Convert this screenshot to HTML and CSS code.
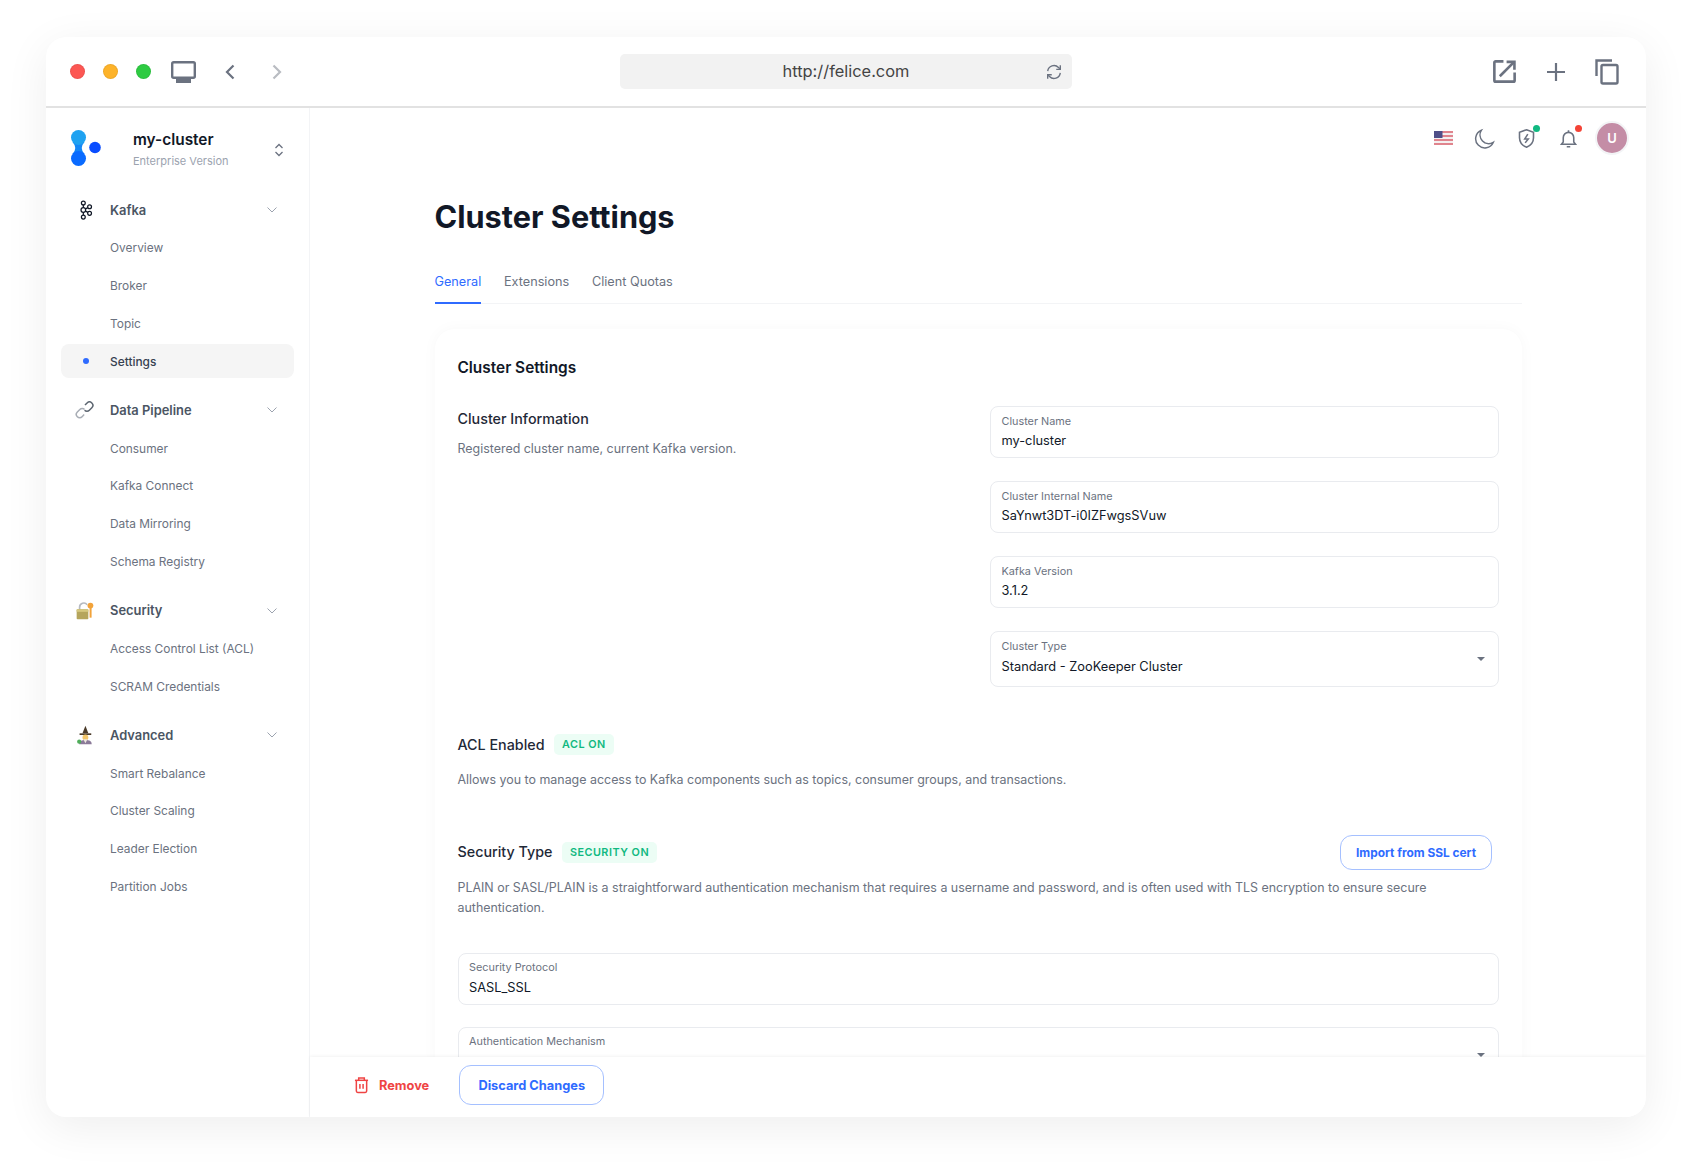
FILE: index.html
```html
<!DOCTYPE html>
<html lang="en">
<head>
<meta charset="utf-8">
<title>Cluster Settings</title>
<link rel="stylesheet" href="styles.css">
</head>
<body>
<div class="window">
  <header class="chrome">
    <div class="chrome-left">
      <span class="dot dot-red"></span><span class="dot dot-orange"></span><span class="dot dot-green"></span>
      <svg class="monitor" viewBox="0 0 25 22"><rect x="1.2" y="1.2" width="22.6" height="15.6" rx="1.5" fill="#fff" stroke="#6b7280" stroke-width="2.4"/><rect x="5" y="18" width="15" height="4" fill="#6b7280"/></svg>
      <svg class="nav-arrow back" viewBox="0 0 10 16"><path d="M8.5 1.500 2 8l6.500 6.500" fill="none" stroke="#6b7280" stroke-width="2.200"/></svg>
      <svg class="nav-arrow forward" viewBox="0 0 10 16"><path d="M1.500 1.500 8 8l-6.500 6.500" fill="none" stroke="#b9bcc2" stroke-width="2.200"/></svg>
    </div>
    <div class="urlbar">
      <span class="url">http://felice.com</span>
      <svg class="refresh" viewBox="0 0 20 20" fill="none" stroke="#6b7280" stroke-width="1.500"><path d="M3 9a7 7 0 0 1 12-4l1.500 1.500"/><path d="M17 11a7 7 0 0 1-12 4l-1.500-1.500"/><path d="M17 2.500V7h-4.500"/><path d="M3 17.500V13h4.500"/></svg>
    </div>
    <div class="chrome-right">
      <svg class="chrome-icon" viewBox="0 0 22 22" fill="none" stroke="#6b7280" stroke-width="2.500"><path d="M10 1.300H2.500a1.200 1.200 0 0 0-1.200 1.200v17a1.200 1.200 0 0 0 1.200 1.200h17a1.200 1.200 0 0 0 1.200-1.200V12"/><path d="M6.500 15.500 20 2"/><path d="M13 1.800h7.500v7.500"/></svg>
      <svg class="chrome-icon plus" viewBox="0 0 18 18" fill="none" stroke="#6b7280" stroke-width="2.200"><path d="M9 0v18M0 9h18"/></svg>
      <svg class="chrome-icon copy" viewBox="0 0 24 26" fill="none" stroke="#6b7280" stroke-width="2.400"><path d="M1.500 17V1.500H17"/><rect x="6.500" y="6" width="16" height="18.500" rx="1.500"/></svg>
    </div>
  </header>
  <div class="app">
    <aside class="sidebar">
      <div class="brand">
        <svg class="logo" viewBox="0 0 30 36"><path d="M1.500 12 Q7 18 1.500 24 L13.500 24 Q8 18 13.500 12 Z" fill="#1487f6"/><circle cx="7.500" cy="7.500" r="7.500" fill="#1fa2f1"/><circle cx="7.500" cy="28.500" r="7.500" fill="#0a6bff"/><circle cx="24" cy="17.500" r="5.800" fill="#0a4dff"/></svg>
        <div class="brand-text">
          <div class="brand-name">my-cluster</div>
          <div class="brand-sub">Enterprise Version</div>
        </div>
        <svg class="updown" viewBox="0 0 10 14" fill="none" stroke="#6b7280" stroke-width="1.300"><path d="M1.500 5 5 1.500 8.500 5"/><path d="M1.500 9 5 12.500 8.500 9"/></svg>
      </div>
      <nav class="nav">
        <div class="nav-section">
          <div class="nav-head">
            <svg class="nav-icon" viewBox="0 0 24 24" fill="none" stroke="#111827" stroke-width="1.500"><circle cx="10" cy="3.500" r="2.300"/><circle cx="10" cy="12" r="2.800"/><circle cx="10" cy="20.500" r="2.300"/><circle cx="17.500" cy="8" r="2.300"/><circle cx="17.500" cy="16" r="2.300"/><path d="M10 5.800v3.400M10 14.800v3.400M12.500 10.700l3-1.500M12.500 13.300l3 1.500"/></svg>
            <span>Kafka</span>
            <svg class="chev" viewBox="0 0 10 6" fill="none" stroke="#9ca3af" stroke-width="1"><path d="M.5.500 5 5 9.500.500"/></svg>
          </div>
          <a class="nav-item">Overview</a>
          <a class="nav-item">Broker</a>
          <a class="nav-item">Topic</a>
          <a class="nav-item active"><i class="bullet"></i>Settings</a>
        </div>
        <div class="nav-section">
          <div class="nav-head">
            <svg class="nav-icon" viewBox="0 0 24 24" fill="none" stroke-width="1.800"><path d="M12 6l2.500-2.500a4 4 0 0 1 5.700 5.700l-3 3a4 4 0 0 1-5.700 0" stroke="#5c6570"/><path d="M11 17.500l-2.500 2.500a4 4 0 0 1-5.700-5.700l3-3a4 4 0 0 1 5.700 0" stroke="#a8adb5"/></svg>
            <span>Data Pipeline</span>
            <svg class="chev" viewBox="0 0 10 6" fill="none" stroke="#9ca3af" stroke-width="1"><path d="M.5.500 5 5 9.500.500"/></svg>
          </div>
          <a class="nav-item">Consumer</a>
          <a class="nav-item">Kafka Connect</a>
          <a class="nav-item">Data Mirroring</a>
          <a class="nav-item">Schema Registry</a>
        </div>
        <div class="nav-section">
          <div class="nav-head">
            <svg class="nav-icon" viewBox="0 0 24 24"><path d="M5.500 11V7.500a5 5 0 0 1 9-3" fill="none" stroke="#b6bac0" stroke-width="2"/><rect x="2" y="10" width="14" height="12" rx="1" fill="#b5a55c"/><rect x="2" y="10" width="14" height="3" fill="#d6c87e"/><circle cx="18.500" cy="5.500" r="3.500" fill="#f2a33a"/><rect x="17.500" y="7" width="2.400" height="13" fill="#f2a33a"/></svg>
            <span>Security</span>
            <svg class="chev" viewBox="0 0 10 6" fill="none" stroke="#9ca3af" stroke-width="1"><path d="M.5.500 5 5 9.500.500"/></svg>
          </div>
          <a class="nav-item">Access Control List (ACL)</a>
          <a class="nav-item">SCRAM Credentials</a>
        </div>
        <div class="nav-section">
          <div class="nav-head">
            <svg class="nav-icon" viewBox="0 0 24 24"><path d="M12.500 1 9 10h7z" fill="#4a3a28"/><path d="M5.500 10h14v2h-14z" fill="#4a3a28"/><circle cx="12.500" cy="15" r="3.500" fill="#f3c66b"/><path d="M5 23c0-4 3-5 7.500-5s7.500 1 7.500 5z" fill="#8b7a99"/><path d="M10 17h5l-2.500 5z" fill="#eee8dc"/><circle cx="5" cy="20" r="2.500" fill="#4fae5a"/></svg>
            <span>Advanced</span>
            <svg class="chev" viewBox="0 0 10 6" fill="none" stroke="#9ca3af" stroke-width="1"><path d="M.5.500 5 5 9.500.500"/></svg>
          </div>
          <a class="nav-item">Smart Rebalance</a>
          <a class="nav-item">Cluster Scaling</a>
          <a class="nav-item">Leader Election</a>
          <a class="nav-item">Partition Jobs</a>
        </div>
      </nav>
    </aside>
    <main class="main">
      <div class="scroll">
        <div class="topbar">
          <svg class="flag" viewBox="0 0 19 14"><rect width="19" height="14" fill="#f4f0f0"/><path d="M0 1h19M0 5h19M0 9h19M0 13h19" stroke="#d9606c" stroke-width="1.500"/><rect width="8.500" height="7" fill="#4f4f88"/></svg>
          <svg class="top-icon" viewBox="0 0 24 24" fill="none" stroke="#6b7280" stroke-width="1.700"><path d="M22 16.500A10 10 0 0 1 8.500 2.500 10.500 10.500 0 1 0 22 16.500z"/></svg>
          <span class="top-wrap">
            <svg class="top-icon" viewBox="0 0 24 24" fill="none" stroke="#6b7280" stroke-width="1.800"><path d="M12 2 20 5v6c0 5-3.500 9-8 11-4.500-2-8-6-8-11V5z"/><path d="M13.500 7 10 12.500h4L10.500 17"/></svg>
            <i class="badge-dot green"></i>
          </span>
          <span class="top-wrap">
            <svg class="top-icon" viewBox="0 0 24 24" fill="none" stroke="#6b7280" stroke-width="1.800"><path d="M18 16v-5a6 6 0 0 0-12 0v5l-2 2.500h16z"/><path d="M10 21.500h4"/><path d="M12 5V2.500"/></svg>
            <i class="badge-dot red"></i>
          </span>
          <span class="avatar">U</span>
        </div>
        <div class="content">
          <h1 class="title">Cluster Settings</h1>
          <div class="tabs">
            <a class="tab active">General</a>
            <a class="tab">Extensions</a>
            <a class="tab">Client Quotas</a>
          </div>
          <section class="card">
            <h2 class="card-title">Cluster Settings</h2>
            <div class="info-grid">
              <div>
                <h3 class="sub first">Cluster Information</h3>
                <p class="desc">Registered cluster name, current Kafka version.</p>
              </div>
              <div class="fields">
                <div class="field"><label>Cluster Name</label><div class="value">my-cluster</div></div>
                <div class="field"><label>Cluster Internal Name</label><div class="value">SaYnwt3DT-i0IZFwgsSVuw</div></div>
                <div class="field"><label>Kafka Version</label><div class="value">3.1.2</div></div>
                <div class="field select tall"><label>Cluster Type</label><div class="value">Standard - ZooKeeper Cluster</div><i class="caret"></i></div>
              </div>
            </div>
            <div class="block acl">
              <div class="block-head"><h3 class="sub">ACL Enabled</h3><span class="tag">ACL ON</span></div>
              <p class="desc">Allows you to manage access to Kafka components such as topics, consumer groups, and transactions.</p>
            </div>
            <div class="block sec">
              <div class="block-head"><h3 class="sub">Security Type</h3><span class="tag">SECURITY ON</span><button class="btn btn-import">Import from SSL cert</button></div>
              <p class="desc">PLAIN or SASL/PLAIN is a straightforward authentication mechanism that requires a username and password, and is often used with TLS encryption to ensure secure authentication.</p>
            </div>
            <div class="fields wide">
              <div class="field"><label>Security Protocol</label><div class="value">SASL_SSL</div></div>
              <div class="field select"><label>Authentication Mechanism</label><i class="caret"></i></div>
            </div>
          </section>
        </div>
      </div>
      <footer class="footer">
        <a class="remove">
          <svg class="trash" viewBox="0 0 16 18" fill="none" stroke="#ef4444" stroke-width="1.600"><path d="M1 4h14"/><path d="M5 4V1.500h6V4"/><path d="M2.500 4v11.500a1.500 1.500 0 0 0 1.500 1.500h8a1.500 1.500 0 0 0 1.500-1.500V4"/><path d="M6.300 8v5M9.700 8v5"/></svg>
          Remove
        </a>
        <button class="btn btn-discard">Discard Changes</button>
      </footer>
    </main>
  </div>
</div>
</body>
</html>
```
FILE: styles.css
```css
* { box-sizing: border-box; }
html, body { margin: 0; padding: 0; background: #fff; }
body { font-family: Inter, "Liberation Sans", sans-serif; color: #111827; height: 1173px; overflow: hidden; padding: 37px 46px 0; }
.window { width: 1600px; height: 1080px; display: flex; flex-direction: column; background: #fff; border-radius: 20px; overflow: hidden; box-shadow: 0 10px 45px rgba(0,0,0,.07); }
.chrome { flex: none; height: 71px; border-bottom: 2px solid #e2e2e2; display: grid; grid-template-columns: 1fr 452px 1fr; align-items: center; }
.chrome-left { display: flex; align-items: center; padding-left: 24px; }
.dot { width: 15px; height: 15px; border-radius: 50%; margin-right: 18px; border: 1px solid rgba(0,0,0,.06); }
.dot-red { background: #fc5753; }
.dot-orange { background: #fdb32a; }
.dot-green { background: #2ecb42; margin-right: 20px; }
.monitor { width: 25px; height: 22px; margin-right: 29px; }
.nav-arrow { width: 10px; height: 16px; }
.forward { margin-left: 37px; }
.urlbar { height: 35px; background: #f2f2f2; border-radius: 5px; display: flex; align-items: center; justify-content: center; position: relative; }
.url { font-size: 16.400px; color: #444; position: relative; top: -1px; }
.refresh { width: 18px; height: 18px; position: absolute; right: 9px; top: 9px; }
.chrome-right { display: flex; align-items: center; justify-content: flex-end; padding-right: 27px; }
.chrome-icon { width: 23px; height: 23px; margin-right: 31.500px; }
.chrome-icon.plus { width: 18px; height: 18px; margin-right: 30px; }
.chrome-icon.copy { width: 24px; height: 26px; margin-right: 0; }
.app { flex: 1; display: flex; min-height: 0; }
.sidebar { flex: none; width: 264px; border-right: 1px solid #f3f4f6; padding: 22px 15px 0; }
.brand { display: flex; align-items: flex-start; padding-left: 10px; height: 63px; }
.logo { width: 30px; height: 36px; flex: none; }
.brand-text { margin-left: 32px; flex: 1; }
.brand-name { font-size: 15.400px; font-weight: 600; line-height: 20px; color: #111827; }
.brand-sub { font-size: 11px; line-height: 16px; color: #9ca3af; margin-top: 3px; }
.updown { width: 10px; height: 14px; margin: 13px 10px 0 0; }
.nav-section + .nav-section { margin-top: 15.250px; }
.nav-head, .nav-item { display: flex; align-items: center; height: 34px; margin-bottom: 3.750px; padding-left: 49px; position: relative; border-radius: 8px; }
.nav-head { font-size: 12.900px; font-weight: 600; color: #4b5563; }
.nav-icon { position: absolute; left: 14px; top: 7px; width: 20px; height: 20px; }
.chev { position: absolute; right: 17px; top: 14px; width: 10px; height: 6px; }
.nav-item { font-size: 11.900px; color: #6b7280; }
.nav-item.active { background: #f5f5f5; color: #374151; font-weight: 500; }
.bullet { position: absolute; left: 22px; top: 14px; width: 6px; height: 6px; border-radius: 50%; background: #2f6bff; }
.main { flex: 1; min-width: 0; display: flex; flex-direction: column; }
.scroll { flex: 1; min-height: 0; overflow: hidden; }
.topbar { display: flex; align-items: center; justify-content: flex-end; height: 60px; padding-right: 17px; }
.flag { width: 19px; height: 14px; margin-right: 21px; }
.top-icon { width: 21px; height: 21px; display: block; }
.top-wrap { position: relative; margin-left: 21px; }
.badge-dot { position: absolute; right: -3px; top: -3px; width: 7px; height: 7px; border-radius: 50%; }
.badge-dot.green { background: #10b981; }
.badge-dot.red { background: #f44336; }
.avatar { width: 34px; height: 34px; margin-left: 16px; border-radius: 50%; background: #c48da6; border: 2px solid #f3f4f6; color: #fff; font-size: 13px; font-weight: 600; display: flex; align-items: center; justify-content: center; }
.content { padding: 24px 124px 0 124.500px; }
.title { margin: 0; font-size: 30.700px; line-height: 50px; font-weight: 700; color: #111827; }
.tabs { display: flex; gap: 22.700px; margin-top: 25.800px; border-bottom: 1px solid #f3f4f6; height: 36.700px; }
.tab { font-size: 12.700px; line-height: 18px; padding-top: 5px; height: 36.700px; color: #6b7280; }
.tab.active { color: #2f6bff; border-bottom: 2px solid #2f6bff; }
.card { margin-top: 25px; border-radius: 20px; background: #fff; padding: 28px 23px 0; box-shadow: 0 0 15px rgba(0,0,0,.03); }
.card-title { margin: 0; font-size: 15.400px; line-height: 22px; font-weight: 600; color: #111827; }
.info-grid { display: grid; grid-template-columns: 1fr 509px; margin-top: 27px; }
.sub { margin: 0; font-size: 14.300px; line-height: 24px; font-weight: 500; color: #1f2937; }
.sub.first { margin-top: 1px; }
.desc { margin: 0; font-size: 12.430px; line-height: 20.600px; color: #6b7280; }
.info-grid .desc { margin-top: 8px; }
.fields { display: flex; flex-direction: column; gap: 23px; }
.field { height: 52px; border: 1px solid #e9ebef; border-radius: 8px; padding: 5.500px 10.500px 0; position: relative; }
.field.tall { height: 55.500px; }
.field.tall .value { margin-top: 3.500px; }
.field label { display: block; font-size: 10.850px; line-height: 16px; color: #6b7280; }
.value { font-size: 12.800px; line-height: 20px; color: #111827; margin-top: 2.500px; }
.caret { position: absolute; right: 13px; top: 25px; width: 0; height: 0; border-left: 4px solid transparent; border-right: 4px solid transparent; border-top: 4.500px solid #6b7280; }
.block-head { display: flex; align-items: center; gap: 9.500px; }
.tag { font-size: 10.800px; line-height: 21px; height: 21px; font-weight: 600; letter-spacing: .5px; padding: 0 8px; color: #10b981; background: #ecfdf5; border-radius: 5px; }
.block .desc { margin-top: 13px; }
.acl { margin-top: 46px; }
.sec { margin-top: 44px; }
.sec .desc { margin-top: 8px; }
.btn { font-family: inherit; font-weight: 700; color: #2f6bff; background: #fff; border: 1px solid #a5c0ff; cursor: pointer; }
.btn-import { margin-left: auto; margin-right: 7px; height: 35px; width: 152px; font-size: 11.900px; border-radius: 12px; padding: 0; }
.wide { margin-top: 34px; gap: 22px; }
.footer { flex: none; height: 60px; display: flex; align-items: center; background: #fff; box-shadow: 0 -1px 3px rgba(0,0,0,.05); position: relative; padding: 0 0 4px 44px; }
.remove { display: flex; align-items: center; gap: 10px; font-size: 12.800px; font-weight: 700; color: #ef4444; }
.trash { width: 15px; height: 18px; }
.btn-discard { margin-left: 30px; width: 145px; height: 40px; font-size: 12.800px; border-radius: 12px; padding: 0; }
```
